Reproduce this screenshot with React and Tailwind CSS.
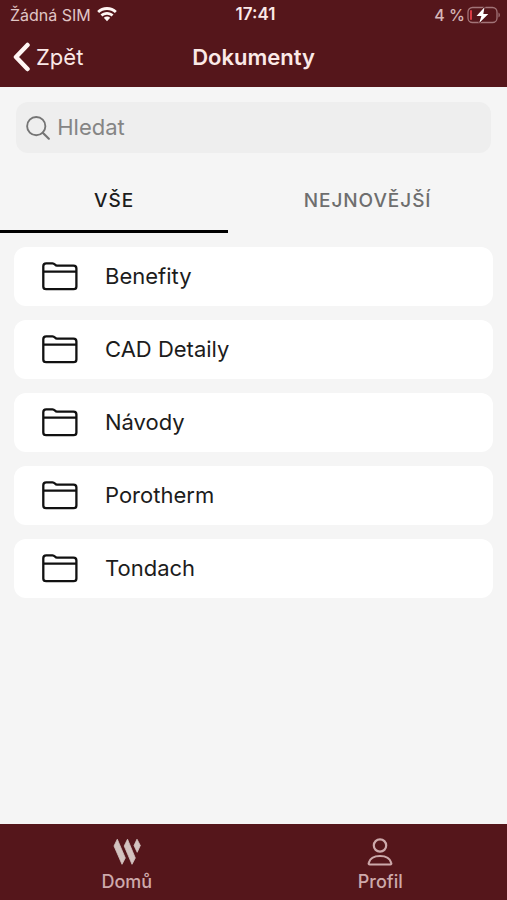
const folders = ["Benefity", "CAD Detaily", "Návody", "Porotherm", "Tondach"];

function WifiIcon() {
  return (
    <svg viewBox="0 0 20 15" className="h-[15px] w-5" fill="#fff6f4" aria-hidden="true">
      <path d="M10 0C6.200 0 2.700 1.500 .2 3.900L2.100 6C4.200 4.100 6.900 2.900 10 2.900S15.800 4.100 17.900 6L19.800 3.900C17.300 1.500 13.800 0 10 0Z" />
      <path d="M10 4.900C7.500 4.900 5.200 5.800 3.500 7.400L5.500 9.500C6.700 8.400 8.300 7.700 10 7.700S13.300 8.400 14.500 9.500L16.500 7.400C14.800 5.800 12.500 4.900 10 4.900Z" />
      <path d="M10 9.500C8.800 9.500 7.700 10 6.800 10.800L10 14.300L13.200 10.800C12.300 10 11.200 9.500 10 9.500Z" />
    </svg>
  );
}

function BatteryIcon() {
  return (
    <svg viewBox="0 0 34 18" className="h-[18px] w-[34px]" fill="none" aria-hidden="true">
      <rect x="1" y="1.500" width="29" height="15" rx="4.500" stroke="#a27478" strokeWidth="1.300" />
      <path d="M31.500 6.500C33.300 7.200 33.300 10.800 31.500 11.500Z" fill="#a27478" />
      <rect x="3" y="4" width="2" height="10" rx="1" fill="#d83a42" />
      <path
        d="M17.500 1.200L9.500 10H14.400L12.200 17L21.300 8H16.300L17.500 1.200Z"
        fill="#fff"
        stroke="#55161b"
        strokeWidth="1.500"
        paintOrder="stroke"
      />
    </svg>
  );
}

function BackIcon() {
  return (
    <svg viewBox="0 0 18 30" className="h-[30px] w-[18px]" fill="none" aria-hidden="true">
      <path d="M15.500 3L4 15L15.500 27" stroke="#fff6f4" strokeWidth="4.500" strokeLinecap="round" strokeLinejoin="round" />
    </svg>
  );
}

function SearchIcon() {
  return (
    <svg viewBox="0 0 26 26" className="h-[26px] w-[26px]" fill="none" aria-hidden="true">
      <circle cx="11" cy="11" r="9.800" stroke="#757575" strokeWidth="2" />
      <path d="M18 18L24.500 24.500" stroke="#757575" strokeWidth="2.300" strokeLinecap="round" />
    </svg>
  );
}

function FolderIcon() {
  return (
    <svg viewBox="0 0 36 30" className="h-[30px] w-9" fill="none" stroke="#111" strokeWidth="2.300" strokeLinejoin="round" aria-hidden="true">
      <path d="M1.300 4.200C1.300 2.500 2.500 1.300 4.200 1.300H10.500C13 1.300 12.800 3.700 15 3.700H31.500C33.200 3.700 34.400 4.900 34.400 6.600V24.500C34.400 26.200 33.200 27.200 31.500 27.200H4.200C2.500 27.200 1.300 26.200 1.300 24.500Z" />
      <path d="M1.300 9.700H34.400" />
    </svg>
  );
}

function HomeLogo() {
  return (
    <svg viewBox="0 0 28 28" className="h-7 w-7" fill="#d3c3c0" stroke="#d3c3c0" strokeWidth=".8" strokeLinejoin="round" aria-hidden="true">
      <path d="M4.300 1.200L12.300 20L9 26.300L1 8Z" />
      <path d="M14.500 1.200L22.300 20L19 26.300L11.200 8Z" />
      <path d="M24 1.200L27.300 7.500L24.200 14.300L21 7.500Z" />
    </svg>
  );
}

function ProfileIcon() {
  return (
    <svg viewBox="0 0 26 28" className="h-7 w-[26px]" fill="none" stroke="#cda9ab" strokeWidth="2.200" aria-hidden="true">
      <circle cx="13" cy="7.500" r="6.200" />
      <path d="M2.800 26.500C1.800 26.500 1.500 25.800 1.800 24.800C3 20.300 7.200 18 13 18S23 20.300 24.200 24.800C24.500 25.800 24.200 26.500 23.200 26.500Z" strokeLinejoin="round" />
    </svg>
  );
}

function FolderRow({ name }) {
  return (
    <li>
      <button type="button" className="flex h-[59px] w-full items-center gap-[27px] rounded-xl bg-white px-7 text-left text-[22px] text-[#1c1c1c]">
        <FolderIcon />
        {name}
      </button>
    </li>
  );
}

function NavItem({ icon, label }) {
  return (
    <a href="#" className="flex flex-1 flex-col items-center gap-1 pt-3.5 text-lg leading-6 font-medium text-[#cda9ab]">
      {icon}
      {label}
    </a>
  );
}

export default function App() {
  return (
    <div className="flex min-h-screen flex-col bg-[#f5f5f5] font-['Inter','Liberation_Sans',sans-serif]">
      <header className="bg-[#55161b] text-[#fbe9e7]">
        <div className="grid h-[29px] grid-cols-[1fr_auto_1fr] items-center pr-1.5 pl-2.5 text-base">
          <div className="flex items-center gap-1.5 text-[#e0c6c6]">
            <span>Žádná SIM</span>
            <WifiIcon />
          </div>
          <time className="text-[17px] font-semibold">17:41</time>
          <div className="flex items-center justify-end gap-0.5 font-medium text-[#d6b6b7]">
            <span>4 %</span>
            <BatteryIcon />
          </div>
        </div>
        <div className="grid h-[58px] grid-cols-[1fr_auto_1fr] items-center px-3 pb-0.5">
          <button type="button" className="flex items-center gap-1.5 justify-self-start text-[22px]">
            <BackIcon />
            Zpět
          </button>
          <h1 className="text-[22px] font-semibold">Dokumenty</h1>
        </div>
      </header>

      <main className="flex-1">
        <label className="mx-4 mt-[15px] flex h-[51px] items-center gap-[7px] rounded-xl bg-[#eeeeee] px-2.5">
          <SearchIcon />
          <input
            type="search"
            aria-label="Hledat"
            placeholder="Hledat"
            className="w-full min-w-0 bg-transparent text-[22px] text-[#1c1c1c] outline-none placeholder:text-[#858585]"
          />
        </label>

        <div role="tablist" className="mt-4 flex h-16 text-[19px] font-medium tracking-wider">
          <button type="button" role="tab" aria-selected="true" className="w-[45%] border-b-3 border-black pt-1 text-[#1c1c1c]">
            VŠE
          </button>
          <button type="button" role="tab" aria-selected="false" className="flex-1 border-b-3 border-transparent pt-1 text-[#6e6e6e]">
            NEJNOVĚJŠÍ
          </button>
        </div>

        <ul className="mt-3.5 flex flex-col gap-3.5 px-3.5">
          {folders.map((name) => (
            <FolderRow key={name} name={name} />
          ))}
        </ul>
      </main>

      <nav className="flex h-[76px] bg-[#55161b]">
        <NavItem icon={<HomeLogo />} label="Domů" />
        <NavItem icon={<ProfileIcon />} label="Profil" />
      </nav>
    </div>
  );
}
